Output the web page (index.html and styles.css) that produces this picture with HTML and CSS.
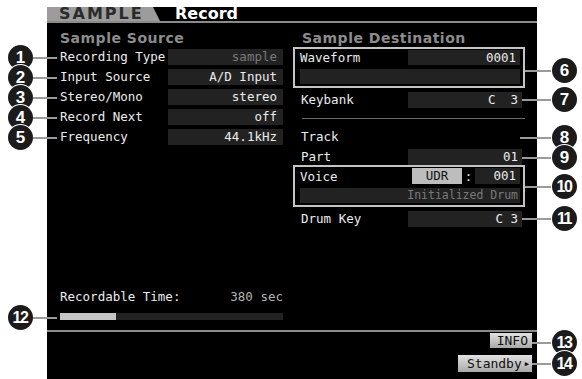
FILE: index.html
```html
<!DOCTYPE html>
<html lang="en">

<head>
    <meta charset="UTF-8">
    <title>SAMPLE Record</title>
    <link rel="stylesheet" href="styles.css">
</head>

<body>

    <div class="page">
        <div class="screen">
            <div class="header">
                <div class="tab">SAMPLE</div>
                <div class="title">Record</div>
            </div>

            <div class="main">
                <div class="col left">
                    <div class="heading">Sample Source</div>
                    <div class="row"><span>Recording Type</span><span class="val dim">sample</span></div>
                    <div class="row"><span>Input Source</span><span class="val">A/D Input</span></div>
                    <div class="row"><span>Stereo/Mono</span><span class="val">stereo</span></div>
                    <div class="row"><span>Record Next</span><span class="val">off</span></div>
                    <div class="row"><span>Frequency</span><span class="val">44.1kHz</span></div>

                    <div class="rec">
                        <div class="row"><span>Recordable Time:</span><span class="time">380 sec</span></div>
                        <div class="bar"><div class="fill"></div></div>
                    </div>
                </div>

                <div class="col right">
                    <div class="heading">Sample Destination</div>
                    <div class="group">
                        <div class="row"><span>Waveform</span><span class="val">0001</span></div>
                        <div class="row blank"></div>
                    </div>
                    <div class="row keybank"><span>Keybank</span><span class="val">C&nbsp;&nbsp;3</span></div>
                    <div class="sep"></div>
                    <div class="row"><span>Track</span></div>
                    <div class="row"><span>Part</span><span class="val">01</span></div>
                    <div class="group voice">
                        <div class="row">
                            <span>Voice</span>
                            <span class="bank">UDR</span>
                            <span class="colon">:</span>
                            <span class="val num3">001</span>
                        </div>
                        <div class="row blank dim">Initialized Drum</div>
                    </div>
                    <div class="row drumkey"><span>Drum Key</span><span class="val">C 3</span></div>
                </div>
            </div>

            <div class="footer">
                <div class="btn info">INFO</div>
                <div class="btn standby">Standby<span class="arrow">&#9654;</span></div>
            </div>
        </div>

        <!-- callouts -->
        <div class="callout l n1"><span class="num">1</span><span class="lead"></span></div>
        <div class="callout l n2"><span class="num">2</span><span class="lead"></span></div>
        <div class="callout l n3"><span class="num">3</span><span class="lead"></span></div>
        <div class="callout l n4"><span class="num">4</span><span class="lead"></span></div>
        <div class="callout l n5"><span class="num">5</span><span class="lead"></span></div>
        <div class="callout l n12"><span class="num two">12</span><span class="lead"></span></div>

        <div class="callout r n6"><span class="lead"></span><span class="num">6</span></div>
        <div class="callout r n7"><span class="lead"></span><span class="num">7</span></div>
        <div class="callout r n8"><span class="lead"></span><span class="num">8</span></div>
        <div class="callout r n9"><span class="lead"></span><span class="num">9</span></div>
        <div class="callout r n10"><span class="lead"></span><span class="num two">10</span></div>
        <div class="callout r n11"><span class="lead"></span><span class="num two">11</span></div>
        <div class="callout r n13"><span class="lead"></span><span class="num two">13</span></div>
        <div class="callout r n14"><span class="lead"></span><span class="num two">14</span></div>
    </div>

</body>

</html>
```

FILE: styles.css
```css
body {
    margin: 0;
    background-color: #fff;
    font-family: "DejaVu Sans Mono", monospace;
}

.page {
    position: relative;
    width: 582px;
    height: 379px;
    padding: 7px 0 0 47px;
    box-sizing: border-box;
    overflow: hidden;
}

.screen {
    width: 490px;
    height: 372px;
    background-color: #000;
    display: flex;
    flex-direction: column;
}

/* header */
.header {
    height: 14px;
    display: flex;
    align-items: center;
    border-bottom: 2px solid #8a8a8a;
}

.tab {
    width: 113px;
    height: 14px;
    box-sizing: border-box;
    padding-left: 12px;
    background-color: #9c9c9c;
    clip-path: polygon(0 0, 106px 0, 113px 100%, 0 100%);
    color: #2b2b2b;
    font: bold 16px/14px "DejaVu Sans", sans-serif;
    letter-spacing: 2px;
}

.title {
    margin-left: 15px;
    color: #fff;
    font: bold 16px/14px "DejaVu Sans", sans-serif;
}

/* main area */
.main {
    display: grid;
    grid-template-columns: 223px 232px;
    column-gap: 10px;
    height: 307px;
    padding: 6px 12px 0 13px;
    box-sizing: border-box;
}

.col {
    display: flex;
    flex-direction: column;
}

.heading {
    height: 18px;
    color: #8c8c8c;
    font: bold 14px/18px "DejaVu Sans", sans-serif;
    letter-spacing: 0.5px;
}

.left .heading {
    margin-bottom: 2px;
}

.right .heading {
    padding-left: 9px;
}

.row {
    display: flex;
    align-items: center;
    height: 16px;
    color: #ececec;
    font-size: 12.5px;
    line-height: 16px;
    white-space: nowrap;
}

.left .row {
    margin-bottom: 4px;
}

.val {
    margin-left: auto;
    width: 115px;
    height: 16px;
    box-sizing: border-box;
    padding-right: 6px;
    background-color: #222;
    text-align: right;
}

.dim {
    color: #7a7a7a;
}

.rec {
    margin-top: auto;
    padding-bottom: 10px;
}

.left .rec .row {
    margin-bottom: 0;
}

.time {
    margin-left: auto;
    color: #b4b4b4;
}

.bar {
    height: 7px;
    margin-top: 8px;
    background-color: #222;
}

.fill {
    width: 56px;
    height: 100%;
    background-color: #c4c4c4;
}

/* destination */
.right .row {
    padding: 0 3px 0 8px;
}

.right .row .val {
    width: 114px;
    padding-right: 4px;
}

.group {
    border: 2px solid #c4c4c4;
    padding: 1px 3px 2px 5px;
}

.group .row {
    height: 15px;
    padding: 0;
    line-height: 15px;
}

.right .group .row .val {
    width: 112px;
    height: 15px;
}

.group .blank {
    margin-top: 3px;
    background-color: #222;
}

.keybank {
    margin-top: 4px;
}

.sep {
    height: 1px;
    margin: 10px 0 10px 9px;
    background-color: #6a6a6a;
}

.right .row + .row {
    margin-top: 4px;
}

.voice .row:first-child {
    height: 16px;
}

.voice .blank {
    justify-content: flex-end;
    padding-right: 2px;
    font-size: 11.5px;
}

.bank {
    margin-left: auto;
    width: 50px;
    height: 16px;
    background-color: #bdbdbd;
    color: #111;
    text-align: center;
}

.colon {
    width: 13px;
    text-align: center;
}

.right .group .row .num3 {
    margin-left: 0;
    width: 45px;
    height: 16px;
}

.drumkey {
    margin-top: 4px;
}

/* footer */
.footer {
    flex: 1;
    display: flex;
    flex-direction: column;
    align-items: flex-end;
    gap: 7px;
    padding: 1px 5px 0 0;
    border-top: 2px solid #8a8a8a;
}

.btn {
    height: 15px;
    padding: 0 4px;
    background: linear-gradient(#e2e2e2, #a9a9a9);
    color: #111;
    font-size: 13px;
    line-height: 15px;
    white-space: nowrap;
    box-sizing: border-box;
    text-align: right;
}

.info {
    width: 42px;
}

.standby {
    width: 74px;
    height: 17px;
    padding: 0 3px;
    line-height: 17px;
}

.arrow {
    margin-left: 3px;
    font-size: 7px;
    vertical-align: 2px;
}

/* callouts */
.callout {
    position: absolute;
    display: flex;
    align-items: center;
}

.callout.l {
    left: 8px;
}

.callout.r {
    right: 5px;
}

.num {
    width: 25px;
    height: 25px;
    border-radius: 50%;
    background-color: #1b1b1b;
    box-shadow: 0 0 0 1px #fff;
    color: #fff;
    font: bold 17px "Liberation Sans", Arial, sans-serif;
    display: flex;
    align-items: center;
    justify-content: center;
}

.num.two {
    font-size: 16px;
    letter-spacing: -1.5px;
    padding-right: 1px;
    box-sizing: border-box;
}

.lead {
    height: 2px;
    background-color: #9a9a9a;
}

.l .lead {
    width: 24px;
}

.n1 { top: 45px; }
.n2 { top: 65px; }
.n3 { top: 85px; }
.n4 { top: 105px; }
.n5 { top: 125px; }
.n12 { top: 305px; }

.n6 { top: 58px; }
.n7 { top: 87px; }
.n8 { top: 125px; }
.n9 { top: 145px; }
.n10 { top: 174px; }
.n11 { top: 206px; }
.n13 { top: 330px; }
.n14 { top: 351px; }

.n6 .lead,
.n10 .lead { width: 27px; }
.n7 .lead,
.n9 .lead,
.n11 .lead { width: 30px; }
.n8 .lead { width: 32px; }
.n13 .lead,
.n14 .lead { width: 20px; }
```
